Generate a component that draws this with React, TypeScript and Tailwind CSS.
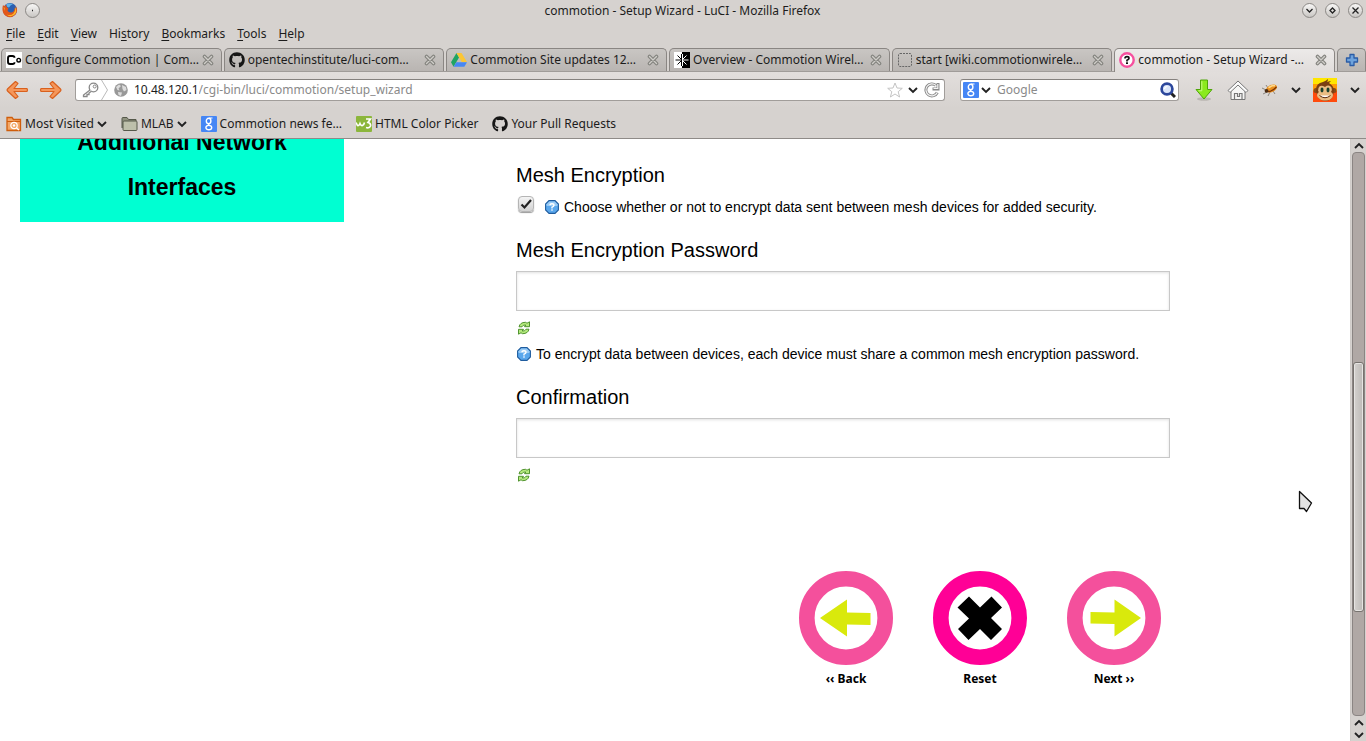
import { useState, type ReactNode } from "react";
import { FaGithub } from "react-icons/fa";

function FirefoxIcon() {
  return (
    <svg width="16" height="16" viewBox="0 0 16 16">
      <circle cx="8" cy="8" r="7" fill="#2b5fb0" />
      <path d="M4 2.5Q7 .8 11 2Q8 3 7 5.500Q5 5.500 4 2.500Z" fill="#5fb4ea" />
      <path d="M1 3L2.500 4.500L4 2.500Q4 5 6.500 6.500L5.500 8.500Q6.500 11 9.500 10.500Q13 9.500 12.500 5.500L14 7Q14 4.500 13 3Q17 8 13.500 12.500Q9 17 4 14Q-1 10.500 1 3Z" fill="#e2571a" />
      <path d="M13.500 5Q15.500 10 12 13Q8 15.500 4.500 12.500Q9 14 11.500 11.500Q13.500 9 13.500 5Z" fill="#fbb829" />
      <path d="M1.500 5L3 6L2.500 9Z" fill="#f39b2a" />
    </svg>
  );
}

function CoIcon() {
  return (
    <svg width="16" height="16" viewBox="0 0 16 16">
      <rect width="16" height="16" fill="#fff" />
      <path d="M8.500 5.800Q8.500 4 6.500 4H4Q2 4 2 6V10Q2 12 4 12H6.500Q8.500 12 8.500 10.200" fill="none" stroke="#000" strokeWidth="1.900" />
      <circle cx="12.700" cy="8.200" r="1.800" fill="none" stroke="#000" strokeWidth="1.400" />
    </svg>
  );
}

function DriveIcon() {
  return (
    <svg width="16" height="16" viewBox="0 0 16 16">
      <path d="M5.500 1L0 10.200L2.600 14.800L8 5.500Z" fill="#1fa463" />
      <path d="M5.500 1H10.500L16 10H10.800Z" fill="#fbc634" />
      <path d="M5.300 10.300H16L13.300 14.800H2.600Z" fill="#4687f4" />
    </svg>
  );
}

function OverviewIcon() {
  return (
    <svg width="16" height="16" viewBox="0 0 16 16">
      <rect width="8" height="16" fill="#fff" />
      <rect x="8" width="8" height="16" fill="#000" />
      <path d="M8 8H1.500M8 8L3.500 3.500M8 8L3.500 12.500M7.500 2V14" stroke="#000" strokeWidth="1" />
      <path d="M8 8H14.500M8 8L12.500 3.500M8 8L12.500 12.500M8.500 2V14" stroke="#fff" strokeWidth="1" />
    </svg>
  );
}

function BlankIcon() {
  return (
    <svg width="16" height="16" viewBox="0 0 16 16">
      <rect x="1.500" y="1.500" width="13" height="13" rx="1.500" fill="none" stroke="#666" strokeDasharray="2 1" />
    </svg>
  );
}

function QuestionRingIcon() {
  return (
    <svg width="16" height="16" viewBox="0 0 16 16">
      <circle cx="8" cy="8" r="6.700" fill="#fff" stroke="#f6509e" strokeWidth="2.400" />
      <path d="M6 6.500Q6 4.700 8 4.700Q10 4.700 10 6.300Q10 7.300 8 8.300V9.500" fill="none" stroke="#111" strokeWidth="1.700" />
      <rect x="7" y="10.300" width="2" height="1.700" fill="#111" />
    </svg>
  );
}

function GoogleIcon() {
  return (
    <svg width="16" height="16" viewBox="0 0 16 16">
      <rect width="16" height="16" rx="1" fill="#4586f5" />
      <ellipse cx="7.600" cy="5" rx="2.300" ry="2.700" fill="none" stroke="#fff" strokeWidth="1.400" />
      <path d="M8 2H11.500M8.500 7.500Q6.500 8.300 8.300 9.200" fill="none" stroke="#fff" strokeWidth="1.200" />
      <ellipse cx="7.800" cy="11.600" rx="2.900" ry="2.200" fill="none" stroke="#fff" strokeWidth="1.400" />
    </svg>
  );
}

function CloseIcon() {
  return (
    <svg width="12" height="12" viewBox="0 0 12 12">
      <path d="M2.500 2.500L9.500 9.500M9.500 2.500L2.500 9.500" stroke="#83837e" strokeWidth="3.600" strokeLinecap="round" />
      <path d="M2.500 2.500L9.500 9.500M9.500 2.500L2.500 9.500" stroke="#cfcdc9" strokeWidth="1.400" strokeLinecap="round" />
    </svg>
  );
}

function Chevron({ up = false }: { up?: boolean }) {
  return (
    <svg width="10" height="8" viewBox="0 0 10 8">
      <path d={up ? "M1 6L5 2L9 6" : "M1 2L5 6L9 2"} fill="none" stroke="#222" strokeWidth="1.900" />
    </svg>
  );
}

function NavArrow({ forward = false }: { forward?: boolean }) {
  return (
    <svg width="24" height="20" viewBox="0 0 24 20">
      <path
        d={
          forward
            ? "M2 8.500H15L11 3.500L13.500 1.500L21.500 9L22 10L21.500 11L13.500 18.500L11 16.500L15 11.500H2Q1 10 2 8.500Z"
            : "M22 8.500H9L13 3.500L10.500 1.500L2.500 9L2 10L2.500 11L10.500 18.500L13 16.500L9 11.500H22Q23 10 22 8.500Z"
        }
        fill="#f5965a"
        stroke="#d9601d"
        strokeWidth="1.200"
        strokeLinejoin="round"
      />
    </svg>
  );
}

function KeyIcon() {
  return (
    <svg width="18" height="16" viewBox="0 0 18 16">
      <circle cx="11.500" cy="5.500" r="4.300" fill="#fff" stroke="#888" strokeWidth="1.300" />
      <circle cx="12.700" cy="4.500" r="1.500" fill="none" stroke="#888" />
      <path d="M8 8L1.500 13V14.500H5V12.500H7V11L9.500 9.300" fill="#fff" stroke="#888" strokeWidth="1.300" />
    </svg>
  );
}

function GlobeIcon() {
  return (
    <svg width="14" height="14" viewBox="0 0 14 14">
      <circle cx="7" cy="7" r="6.800" fill="#989898" />
      <path d="M2 4L5 1.500L7 3L4.500 5.500L5.500 7.500L3.500 7ZM8 2L12 4L12.500 7L10 8.500L8.500 6ZM4 9L8 9.500L7 13L4.500 12Z" fill="#dcdcdc" />
    </svg>
  );
}

function StarIcon() {
  return (
    <svg width="16" height="16" viewBox="0 0 16 16">
      <path d="M8 1L10 6L15.300 6.300L11.200 9.700L12.600 15L8 12L3.400 15L4.800 9.700L.7 6.300L6 6Z" fill="#fff" stroke="#c4c4c4" strokeLinejoin="round" />
    </svg>
  );
}

function ReloadIcon() {
  return (
    <svg width="16" height="16" viewBox="0 0 16 16">
      <path d="M13.300 10.500A6 6 0 1 1 12 3.500M14 1V7H8.500" fill="none" stroke="#888" strokeWidth="3" />
      <path d="M13.300 10.500A6 6 0 1 1 12 3.500M13.800 2V6.500H9.500" fill="none" stroke="#f4f4f4" strokeWidth="1.200" />
    </svg>
  );
}

function SearchIcon() {
  return (
    <svg width="16" height="16" viewBox="0 0 16 16">
      <path d="M10.500 10.500L15 15" stroke="#222" strokeWidth="3" />
      <circle cx="7" cy="7" r="5.400" fill="#dbe6fa" stroke="#2c479c" strokeWidth="2.700" />
      <path d="M4.500 7Q5 4.500 7.500 4.500" fill="none" stroke="#fff" strokeWidth="1.200" />
    </svg>
  );
}

function DownloadIcon() {
  return (
    <svg width="18" height="22" viewBox="0 0 18 22">
      <ellipse cx="9" cy="20" rx="7" ry="1.800" fill="#bbb7b2" />
      <path d="M5.500 1H12.500V10.500H17L9 20L1 10.500H5.500Z" fill="#8aea1d" stroke="#4fa50a" strokeLinejoin="round" />
      <path d="M6.800 2.200V11.800H3.500" fill="none" stroke="#c8fa86" />
    </svg>
  );
}

function HomeIcon() {
  return (
    <svg width="22" height="21" viewBox="0 0 22 21">
      <path d="M4 10V19.500H18V10L11 4Z" fill="#f6f6f5" stroke="#777" />
      <path d="M7.500 19.500V13.500H10.500V16.500H12.500V13.500H15V19.500" fill="none" stroke="#777" strokeWidth="1.200" />
      <path d="M1 10.500L11 1L21 10.500L19 12.500L11 5L3 12.500Z" fill="#fafafa" stroke="#777" strokeLinejoin="round" />
    </svg>
  );
}

function FireflyIcon() {
  return (
    <svg width="18" height="14" viewBox="0 0 18 14">
      <path d="M5 7L1 5M6 9L2 11M9 9L7 13M12 8L14 11M7 5L5 2" stroke="#8a8580" />
      <ellipse cx="10.500" cy="5.500" rx="5.800" ry="3.600" transform="rotate(-25 10.500 5.500)" fill="#e9901f" />
      <path d="M7.500 4.800L11.500 2.500L14 2.800" fill="none" stroke="#ffd98a" strokeWidth="1.600" />
      <path d="M6 8.500Q11 9 15.500 4" fill="none" stroke="#7c3205" strokeWidth="1.200" />
      <circle cx="5.500" cy="7.800" r="1.900" fill="#4c2c12" />
    </svg>
  );
}

function MonkeyIcon() {
  return (
    <svg width="24" height="24" viewBox="0 0 24 24">
      <rect width="24" height="24" fill="#ff4b0c" />
      <rect width="24" height="13" fill="#ff9c07" />
      <rect width="24" height="6" fill="#ffe600" />
      <circle cx="3" cy="12.500" r="2.500" fill="#8a4a17" />
      <circle cx="21" cy="12.500" r="2.500" fill="#8a4a17" />
      <path d="M3 12Q3 5 10 4Q13 3 15 1Q15 3 14 4Q17 3 18 3L16 5Q21 8 21 13Q20 23 12 23Q4 23 3 12Z" fill="#7b3f12" />
      <path d="M12 9Q7 6 5.500 10Q4.500 13 6 14Q3 16 4.500 19Q8 23 12 22.500Q17 23 19.500 19Q21 16 18 14Q19.500 12 18.500 9.500Q16 6 12 9Z" fill="#e9bd83" />
      <ellipse cx="9" cy="12" rx="1.500" ry="2.400" fill="#16402d" />
      <ellipse cx="15" cy="12" rx="1.500" ry="2.400" fill="#16402d" />
      <path d="M6.500 17.500Q12 22 17.500 17.500" fill="#fff" stroke="#5b2a0b" />
    </svg>
  );
}

function PlusIcon() {
  return (
    <svg width="14" height="14" viewBox="0 0 14 14">
      <path d="M5 1.500H9V5H12.500V9H9V12.500H5V9H1.500V5H5Z" fill="#6ea3dc" stroke="#2a5ca6" strokeWidth="1.300" strokeLinejoin="round" />
    </svg>
  );
}

function MostVisitedIcon() {
  return (
    <svg width="16" height="16" viewBox="0 0 16 16">
      <path d="M1 14.500V1.500H6L7.500 3.500H14.500V14.500Z" fill="#f3a766" stroke="#cf5d0b" strokeWidth="1.300" />
      <path d="M1 5.500H15" stroke="#cf5d0b" />
      <circle cx="8" cy="9.500" r="3.200" fill="none" stroke="#fff" strokeWidth="1.200" />
      <circle cx="8" cy="9.500" r="1.200" fill="#fff" />
      <path d="M10.500 12L13 14" stroke="#fff" strokeWidth="1.500" />
    </svg>
  );
}

function FolderIcon() {
  return (
    <svg width="17" height="16" viewBox="0 0 17 16">
      <path d="M1 12V2.500Q1 1.500 2 1.500H6L7.500 3.500H15V5" fill="#8f927f" stroke="#55584a" />
      <path d="M3 14.500Q2 14.500 2 13.500V6Q2 5 3 5H15Q16 5 16 6V13.500Q16 14.500 15 14.500Z" fill="#bdc0ab" stroke="#55584a" />
    </svg>
  );
}

function W3Icon() {
  return (
    <svg width="16" height="16" viewBox="0 0 16 16">
      <rect width="16" height="16" rx="1" fill="#8cb63c" />
      <path d="M0 6.500L1.500 9.500Q3 10 4 7.500Q5 10 6.500 9.500Q8 9 8.500 6.500" fill="none" stroke="#fff" strokeWidth="1.600" />
      <path d="M10 3H14.500L12 6.500Q15 7 14.500 10Q13.500 12.500 10 11.500" fill="none" stroke="#fff" strokeWidth="1.700" />
    </svg>
  );
}

function HelpIcon() {
  return (
    <svg width="14" height="14" viewBox="0 0 14 14" className="shrink-0">
      <path d="M4 .6H10L13.400 4V10L10 13.400H4L.6 10V4Z" fill="#5aa7ec" stroke="#1f5c9e" strokeWidth="1.100" />
      <path d="M4.300 1.600H9.700L12.400 4.300V6H1.600V4.300Z" fill="#9acbf5" />
      <path d="M5 5.300Q5 3.700 7 3.700Q9 3.700 9 5.200Q9 6.300 7 7.200V8.500" fill="none" stroke="#fff" strokeWidth="1.400" />
      <rect x="6.300" y="9.300" width="1.400" height="1.400" fill="#fff" />
    </svg>
  );
}

function RefreshIcon() {
  return (
    <svg width="14" height="14" viewBox="0 0 14 14">
      <path d="M2 5.800Q3 1.300 8.500 1.300L10 2.200L12.500 .8V5.700H7.500L8.800 4Q6 3.600 5 5.800Z" fill="#b4e87e" stroke="#438a20" strokeWidth=".9" />
      <path d="M12 8.200Q11 12.700 5.500 12.700L4 11.800L1.500 13.200V8.300H6.500L5.200 10Q8 10.400 9 8.200Z" fill="#b4e87e" stroke="#438a20" strokeWidth=".9" />
    </svg>
  );
}

function WindowButton({ label, children }: { label: string; children: ReactNode }) {
  return (
    <button aria-label={label} className="flex size-[15px] items-center justify-center rounded-full border border-[#8b8885] bg-linear-to-b from-[#f8f7f6] to-[#c9c6c3]">
      <svg width="9" height="9" viewBox="0 0 9 9" fill="none" stroke="#222" strokeWidth="1.300">
        {children}
      </svg>
    </button>
  );
}

const menus: [string, string, string][] = [
  ["", "F", "ile"],
  ["", "E", "dit"],
  ["", "V", "iew"],
  ["Hi", "s", "tory"],
  ["", "B", "ookmarks"],
  ["", "T", "ools"],
  ["", "H", "elp"],
];

const tabs: { title: string; icon: ReactNode; active?: boolean }[] = [
  { title: "Configure Commotion | Com…", icon: <CoIcon /> },
  { title: "opentechinstitute/luci-com…", icon: <FaGithub size={16} color="#161616" /> },
  { title: "Commotion Site updates 12…", icon: <DriveIcon /> },
  { title: "Overview - Commotion Wirel…", icon: <OverviewIcon /> },
  { title: "start [wiki.commotionwirele…", icon: <BlankIcon /> },
  { title: "commotion - Setup Wizard -…", icon: <QuestionRingIcon />, active: true },
];

const bookmarks: { title: string; icon: ReactNode; folder?: boolean }[] = [
  { title: "Most Visited", icon: <MostVisitedIcon />, folder: true },
  { title: "MLAB", icon: <FolderIcon />, folder: true },
  { title: "Commotion news fe…", icon: <GoogleIcon /> },
  { title: "HTML Color Picker", icon: <W3Icon /> },
  { title: "Your Pull Requests", icon: <FaGithub size={16} color="#161616" /> },
];

function BrowserChrome() {
  return (
    <header className="relative shrink-0 border-b border-[#8f8b88] bg-[#d6d2cf] font-['Noto_Sans',sans-serif] text-xs text-[#1c1c1c]">
      <div className="flex h-5 items-center pl-[2px] pr-[3px]">
        <div className="flex flex-1 items-center gap-[7px]">
          <FirefoxIcon />
          <WindowButton label="Window menu">
            <path d="M4 4.500H5" />
          </WindowButton>
        </div>
        <h1 className="pt-[2px]">commotion - Setup Wizard - LuCI - Mozilla Firefox</h1>
        <div className="flex flex-1 items-center justify-end gap-2">
          <WindowButton label="Minimize">
            <path d="M1.500 3L4.500 6L7.500 3" />
          </WindowButton>
          <WindowButton label="Maximize">
            <path d="M4.500 2L7 4.500L4.500 7L2 4.500Z" />
          </WindowButton>
          <WindowButton label="Close">
            <path d="M1.500 1.500L7.500 7.500M7.500 1.500L1.500 7.500" />
          </WindowButton>
        </div>
      </div>

      <nav aria-label="Menu" className="flex h-7 items-center gap-3 pl-[6px]">
        {menus.map(([before, key, after]) => (
          <button key={key + after}>
            {before}
            <span className="underline underline-offset-2">{key}</span>
            {after}
          </button>
        ))}
      </nav>

      <div className="flex h-6 gap-[2px] border-b border-[#a09c99] pl-px">
        {tabs.map((tab) => (
          <div
            key={tab.title}
            className={
              tab.active
                ? "-mb-px flex min-w-0 flex-1 items-center rounded-t-[5px] border border-b-0 border-[#8a8683] bg-linear-to-b from-[#eceae9] to-[#e1dddb] pb-px pl-1 pr-[7px]"
                : "flex min-w-0 flex-1 items-center rounded-t-[5px] border border-b-0 border-[#8a8683] bg-linear-to-b from-[#c9c6c3] to-[#b9b5b2] pl-1 pr-[7px]"
            }
          >
            <button className="flex min-w-0 flex-1 items-center gap-[3px] whitespace-nowrap text-left">
              <span className="shrink-0">{tab.icon}</span>
              <span className="overflow-hidden">{tab.title}</span>
            </button>
            <button aria-label="Close tab">
              <CloseIcon />
            </button>
          </div>
        ))}
        <button aria-label="New tab" className="flex w-[29px] shrink-0 items-center justify-center rounded-t-[5px] border border-b-0 border-[#8a8683] bg-linear-to-b from-[#c9c6c3] to-[#b9b5b2]">
          <PlusIcon />
        </button>
      </div>

      <div className="flex h-9 items-center bg-linear-to-b from-[#e2dedc] to-[#d6d2cf] pl-[5px] pr-[6px]">
        <button aria-label="Back">
          <NavArrow />
        </button>
        <button aria-label="Forward" className="ml-[10px]">
          <NavArrow forward />
        </button>
        <div className="ml-3 flex h-[22px] min-w-0 flex-1 items-center rounded-[3px] border border-[#a19d9a] border-t-[#85817e] bg-white pr-1">
          <button aria-label="Site identity" className="flex h-full items-center pl-[6px]">
            <KeyIcon />
            <svg width="9" height="20" viewBox="0 0 9 20">
              <path d="M1.500 0L7.500 10L1.500 20" fill="none" stroke="#bbb" />
            </svg>
          </button>
          <span className="ml-[5px]">
            <GlobeIcon />
          </span>
          <label className="ml-[6px] flex min-w-0 flex-1 items-center">
            <span>10.48.120.1</span>
            <input aria-label="Address" type="text" defaultValue="/cgi-bin/luci/commotion/setup_wizard" className="min-w-0 flex-1 bg-transparent text-[#8a8a8a] outline-none" />
          </label>
          <button aria-label="Bookmark this page">
            <StarIcon />
          </button>
          <button aria-label="Show history" className="ml-[5px]">
            <Chevron />
          </button>
          <button aria-label="Reload" className="ml-[6px]">
            <ReloadIcon />
          </button>
        </div>
        <div className="ml-[15px] flex h-[22px] w-[219px] items-center rounded-[3px] border border-[#a19d9a] border-t-[#85817e] bg-white pl-[2px] pr-[2px]">
          <button aria-label="Search engine" className="flex items-center gap-[2px]">
            <GoogleIcon />
            <Chevron />
          </button>
          <input aria-label="Search" type="text" placeholder="Google" className="ml-[6px] min-w-0 flex-1 bg-transparent outline-none placeholder:text-[#8a8a8a]" />
          <button aria-label="Search">
            <SearchIcon />
          </button>
        </div>
        <button aria-label="Downloads" className="ml-4">
          <DownloadIcon />
        </button>
        <button aria-label="Home" className="ml-[14px]">
          <HomeIcon />
        </button>
        <button aria-label="Firebug" className="ml-3">
          <FireflyIcon />
        </button>
        <button aria-label="Firebug options" className="ml-3">
          <Chevron />
        </button>
        <button aria-label="Greasemonkey" className="ml-3">
          <MonkeyIcon />
        </button>
        <button aria-label="Greasemonkey options" className="ml-[13px]">
          <Chevron />
        </button>
      </div>

      <nav aria-label="Bookmarks" className="flex h-[30px] items-center gap-[14px] pl-[6px] pt-px">
        {bookmarks.map((mark) => (
          <button key={mark.title} className="flex items-center gap-[3px] whitespace-nowrap">
            {mark.icon}
            {mark.title}
            {mark.folder && <Chevron />}
          </button>
        ))}
      </nav>
    </header>
  );
}

function PasswordField({ id, label }: { id: string; label: string }) {
  const [visible, setVisible] = useState(false);
  return (
    <>
      <label htmlFor={id} className="mt-[15px] block text-xl leading-[30px]">
        {label}
      </label>
      <input
        id={id}
        type={visible ? "text" : "password"}
        className="mt-[6px] block h-10 w-full border border-[#c8c8c8] bg-white px-2 shadow-[inset_0_1px_3px_rgba(0,0,0,0.12)] outline-none"
      />
      <button type="button" aria-label="Reveal or hide password" onClick={() => setVisible(!visible)} className="mt-1 flex h-[26px] items-center pl-px">
        <RefreshIcon />
      </button>
    </>
  );
}

function RoundButton({ label, ring, children }: { label: string; ring: string; children: ReactNode }) {
  return (
    <button type="button" className="flex w-[94px] flex-col items-center font-['Noto_Sans',sans-serif] text-xs font-bold leading-5">
      <svg width="94" height="94" viewBox="0 0 94 94">
        <circle cx="47" cy="47" r="39.200" fill="#fff" stroke={ring} strokeWidth="15.600" />
        {children}
      </svg>
      <span className="mt-1">{label}</span>
    </button>
  );
}

function Scrollbar() {
  return (
    <div className="flex w-4 shrink-0 flex-col items-center border-l border-[#d0ccc9] bg-[#d6d2cf]">
      <button aria-label="Scroll up" className="flex h-[13px] items-center">
        <Chevron up />
      </button>
      <div className="flex w-[13px] flex-1 flex-col rounded-[4px] border border-[#8b8583] bg-[#b0a8a5]">
        <div className="flex-[210]" />
        <div className="flex-[249] rounded-[3px] border border-[#77736f] bg-linear-to-r from-[#d4d1ce] to-[#bdbab7] shadow-[inset_0_0_0_1px_#e6e4e2]" />
        <div className="flex-[104]" />
      </div>
      <button aria-label="Scroll up one line" className="flex h-[13px] items-center">
        <Chevron up />
      </button>
      <button aria-label="Scroll down" className="flex h-3 items-center">
        <Chevron />
      </button>
    </div>
  );
}

export default function App() {
  return (
    <div className="relative flex h-screen flex-col overflow-hidden bg-white font-['Liberation_Sans',sans-serif] text-black">
      <BrowserChrome />
      <div className="flex min-h-0 flex-1">
        <main className="flex min-w-0 flex-1 items-start overflow-hidden">
          <a href="#interfaces" className="-mt-[19px] ml-5 w-[24%] shrink-0 bg-[#00ffd2] px-10 pb-3 text-center text-[23px] font-bold leading-[45px]">
            Additional Network Interfaces
          </a>
          <form className="ml-[172px] mr-[180px] min-w-0 flex-1 pt-[21px] text-sm">
            <h2 className="text-xl leading-[30px]">Mesh Encryption</h2>
            <div className="mt-1 flex h-[26px] items-start pl-px">
              <span className="mt-px grid size-[18px] place-items-center">
                <input
                  id="encrypt"
                  type="checkbox"
                  defaultChecked
                  className="peer col-start-1 row-start-1 size-4 appearance-none rounded-[4px] border border-[#b5b5b5] bg-linear-to-b from-[#f4f4f4] to-[#d2d2d2] shadow-[0_1px_1px_rgba(0,0,0,0.4)]"
                />
                <svg width="12" height="12" viewBox="0 0 12 12" className="pointer-events-none col-start-1 row-start-1 hidden peer-checked:block">
                  <path d="M1.500 6.500L4.500 9.500L11 2" fill="none" stroke="#222" strokeWidth="2.200" />
                </svg>
              </span>
              <label htmlFor="encrypt" className="ml-[10px] flex items-center gap-[5px] leading-[26px]">
                <HelpIcon />
                Choose whether or not to encrypt data sent between mesh devices for added security.
              </label>
            </div>

            <PasswordField id="password" label="Mesh Encryption Password" />
            <p className="flex items-center gap-[5px] pl-px leading-[26px]">
              <HelpIcon />
              To encrypt data between devices, each device must share a common mesh encryption password.
            </p>
            <PasswordField id="confirmation" label="Confirmation" />

            <div className="mt-[83px] flex justify-end gap-10 pr-[9px]">
              <RoundButton label="‹‹ Back" ring="#f4509c">
                <path d="M21 47L48 28.500V41.500L71.500 42V54L48 53.500V65.500Z" fill="#d9e90c" />
              </RoundButton>
              <RoundButton label="Reset" ring="#ff0096">
                <path d="M36 25.500L47 36.500L58.500 25.500L69 36.500L58 47L69 58L58 69L47 58L35.500 69L25 58L36 47.500L24.500 36.500Z" fill="#000" />
              </RoundButton>
              <RoundButton label="Next ››" ring="#f4509c">
                <path d="M74 47L47.500 65.500V53L23.500 52.500V41L47.500 41.500V28.500Z" fill="#d9e90c" />
              </RoundButton>
            </div>
          </form>
        </main>
        <Scrollbar />
      </div>
      <svg width="16" height="24" viewBox="0 0 16 24" className="pointer-events-none absolute left-[95%] top-[490px]">
        <path d="M1.500 1.500V18.500L6 18.500L8.500 21.500L10 19L13.500 13Z" fill="#e3e3e3" stroke="#111" strokeWidth="1.300" strokeLinejoin="round" />
      </svg>
    </div>
  );
}
